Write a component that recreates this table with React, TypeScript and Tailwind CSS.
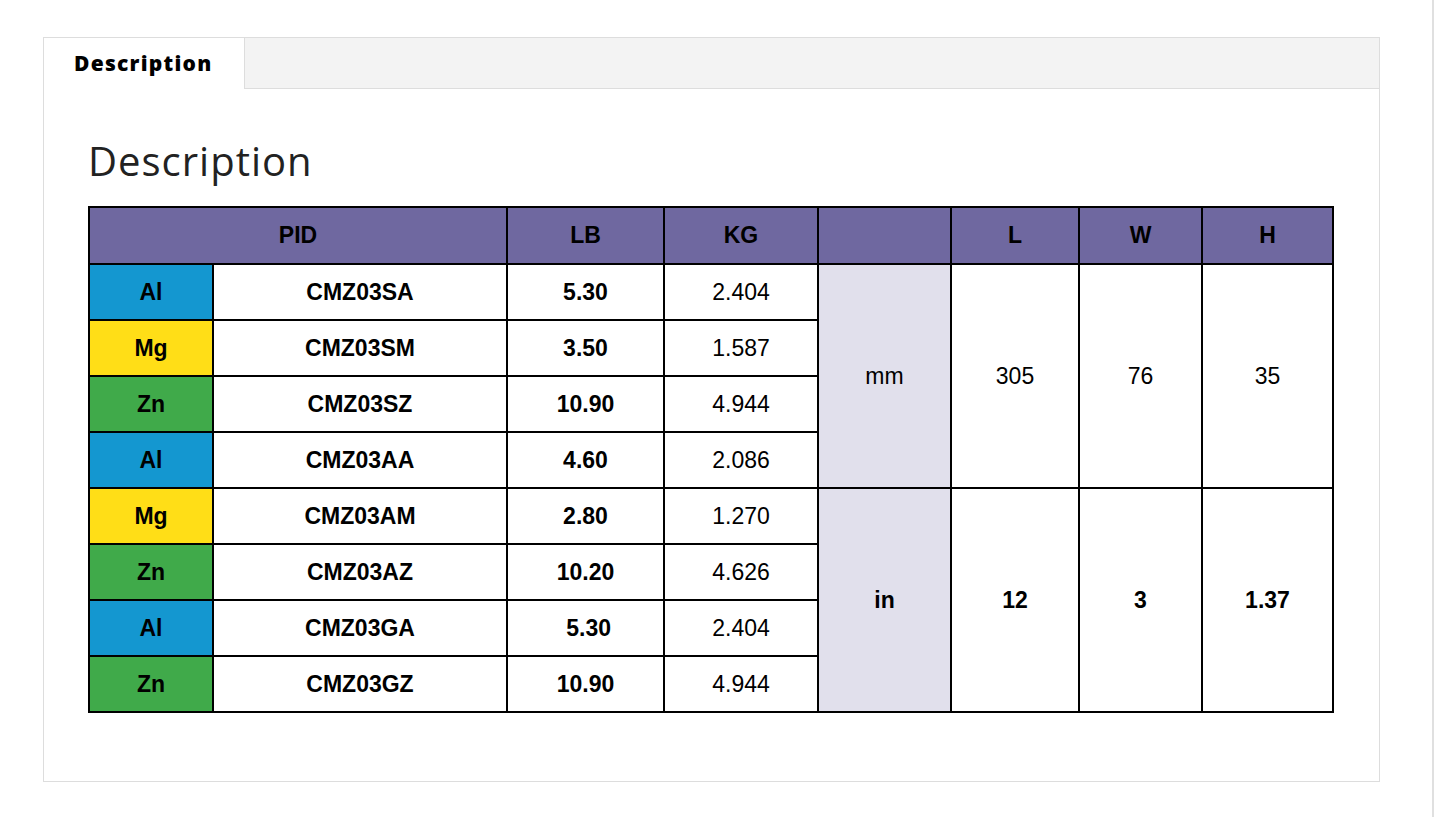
import React from "react";

type Row = { metal: "Al" | "Mg" | "Zn"; pid: string; lb: string; kg: string };

const rows: Row[] = [
  { metal: "Al", pid: "CMZ03SA", lb: "5.30", kg: "2.404" },
  { metal: "Mg", pid: "CMZ03SM", lb: "3.50", kg: "1.587" },
  { metal: "Zn", pid: "CMZ03SZ", lb: "10.90", kg: "4.944" },
  { metal: "Al", pid: "CMZ03AA", lb: "4.60", kg: "2.086" },
  { metal: "Mg", pid: "CMZ03AM", lb: "2.80", kg: "1.270" },
  { metal: "Zn", pid: "CMZ03AZ", lb: "10.20", kg: "4.626" },
  { metal: "Al", pid: "CMZ03GA", lb: "\u00a05.30", kg: "2.404" },
  { metal: "Zn", pid: "CMZ03GZ", lb: "10.90", kg: "4.944" },
];

const metalBg: Record<Row["metal"], string> = {
  Al: "bg-[#1497d0]",
  Mg: "bg-[#ffde17]",
  Zn: "bg-[#40aa4a]",
};

const cell = "border-2 border-black text-center align-middle p-0";

export default function App() {
  return (
    <div className="flex h-[817px] w-full bg-white">
      <div className="w-[1432px] pl-[43px] pt-[37px]">
        <div className="w-[1337px] border border-[#dddddd] bg-white">
          <div className="flex h-[51px]">
            <div className="flex w-[200px] items-center bg-white pl-[30px]">
              <span
                className="text-[21px] font-extrabold tracking-[0.06em] text-black"
                style={{ fontFamily: '"Open Sans", "Liberation Sans", sans-serif' }}
              >
                Description
              </span>
            </div>
            <div className="flex-1 border-b border-l border-[#dddddd] bg-[#f3f3f3]" />
          </div>
          <div className="pb-[68px] pl-[44px] pt-[48px]">
            <h2
              className="h-[48px] text-[40px] leading-[48px] font-normal tracking-[0.025em] text-[#222222]"
              style={{ fontFamily: '"Open Sans", "Liberation Sans", sans-serif' }}
            >
              Description
            </h2>
            <table
              className="mt-[21px] w-[1244px] table-fixed border-collapse text-[23px] text-black"
              style={{ fontFamily: '"Liberation Sans", Arial, sans-serif' }}
            >
              <colgroup>
                <col className="w-[124px]" />
                <col className="w-[294px]" />
                <col className="w-[157px]" />
                <col className="w-[154px]" />
                <col className="w-[133px]" />
                <col className="w-[128px]" />
                <col className="w-[123px]" />
                <col className="w-[131px]" />
              </colgroup>
              <thead>
                <tr className="h-[57px] bg-[#6f68a0] font-bold">
                  <th colSpan={2} className={cell}>PID</th>
                  <th className={cell}>LB</th>
                  <th className={cell}>KG</th>
                  <th className={cell}></th>
                  <th className={cell}>L</th>
                  <th className={cell}>W</th>
                  <th className={cell}>H</th>
                </tr>
              </thead>
              <tbody>
                {rows.map((r, i) => (
                  <tr key={i} className="h-[56px]">
                    <td className={`${cell} ${metalBg[r.metal]} font-bold`}>{r.metal}</td>
                    <td className={`${cell} bg-white font-bold`}>{r.pid}</td>
                    <td className={`${cell} bg-white font-bold`}>{r.lb}</td>
                    <td className={`${cell} bg-white`}>{r.kg}</td>
                    {i === 0 && (
                      <>
                        <td rowSpan={4} className={`${cell} bg-[#e1e0ec]`}>mm</td>
                        <td rowSpan={4} className={`${cell} bg-white`}>305</td>
                        <td rowSpan={4} className={`${cell} bg-white`}>76</td>
                        <td rowSpan={4} className={`${cell} bg-white`}>35</td>
                      </>
                    )}
                    {i === 4 && (
                      <>
                        <td rowSpan={4} className={`${cell} bg-[#e1e0ec] font-bold`}>in</td>
                        <td rowSpan={4} className={`${cell} bg-white font-bold`}>12</td>
                        <td rowSpan={4} className={`${cell} bg-white font-bold`}>3</td>
                        <td rowSpan={4} className={`${cell} bg-white font-bold`}>1.37</td>
                      </>
                    )}
                  </tr>
                ))}
              </tbody>
            </table>
          </div>
        </div>
      </div>
      <div className="h-full w-[2px] bg-[#e0e0e0]" />
    </div>
  );
}
